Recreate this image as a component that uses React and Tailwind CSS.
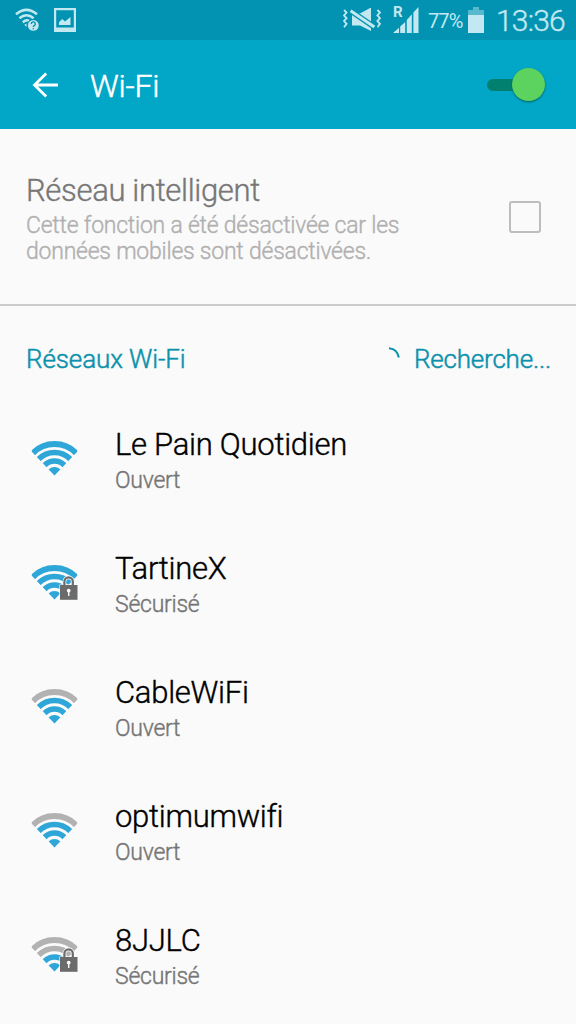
import React from "react";

const networks = [
  { name: "Le Pain Quotidien", status: "Ouvert", level: 4, secured: false },
  { name: "TartineX", status: "Sécurisé", level: 4, secured: true },
  { name: "CableWiFi", status: "Ouvert", level: 3, secured: false },
  { name: "optimumwifi", status: "Ouvert", level: 3, secured: false },
  { name: "8JJLC", status: "Sécurisé", level: 2, secured: true },
];

const bands = [
  { level: 4, radius: 30.6, width: 6 },
  { level: 3, radius: 22.2, width: 5.6 },
  { level: 2, radius: 13.7, width: 5.6 },
];

const WifiIcon = ({ level, secured }) => (
  <svg className="w-[49px] h-[40px] shrink-0" viewBox="0 0 49 40" fill="none">
    <defs>
      <clipPath id="fan">
        <path d="M24.5 34.6 L1.8 10.8 V-1 H47.2 V10.8 Z" />
      </clipPath>
    </defs>
    <g clipPath="url(#fan)">
      {bands.map((band) => (
        <circle
          key={band.level}
          cx="24.5"
          cy="33.7"
          r={band.radius}
          stroke={band.level <= level ? "#2ea7d8" : "#b2b2b2"}
          strokeWidth={band.width}
        />
      ))}
      <circle cx="24.5" cy="34" r="8" fill="#2ea7d8" />
    </g>
    {secured && (
      <g>
        <path d="M34.4 20 V16.6 a4.2 4.2 0 0 1 8.4 0 V20" stroke="#fafafa" strokeWidth="3.6" />
        <path d="M29.4 19.5 H48 V35 H29.4 Z" fill="#fafafa" />
        <path d="M34.4 21 V16.6 a4.2 4.2 0 0 1 8.4 0 V21" stroke="#6b6b6b" strokeWidth="2.2" />
        <path d="M30 20 H47.5 V34.8 H30 Z" fill="#6b6b6b" />
        <circle cx="38.7" cy="25.6" r="1.9" fill="#fafafa" />
        <path d="M38 25.6 H39.4 V31 H38 Z" fill="#fafafa" />
      </g>
    )}
  </svg>
);

const StatusBar = () => (
  <div className="h-10 bg-[#0193b1] flex items-center justify-between pl-[15px] pr-[11px] text-[#c3e8f1]">
    <div className="flex items-center gap-[14px]">
      <svg className="w-[25px] h-[24px]" viewBox="0 0 25 24" fill="none">
        <path d="M1 6.2 Q11.5 -2.6 22 6.2" stroke="currentColor" strokeWidth="2.6" />
        <path d="M4.4 10.3 Q11.5 4.2 18.6 10.3" stroke="currentColor" strokeWidth="2.6" />
        <path d="M7.8 14.2 Q11 11.5 14 12.6" stroke="currentColor" strokeWidth="2.5" />
        <path d="M9.3 16.8 L11.5 15.6 V19 Z" fill="currentColor" />
        <circle cx="18.3" cy="17.4" r="6.3" fill="#0193b1" />
        <circle cx="18.3" cy="17.4" r="5.4" fill="currentColor" />
        <path d="M16.3 16 a2 2 0 1 1 3 1.6 q-1 .5 -1 1.4" stroke="#0193b1" strokeWidth="1.4" />
        <circle cx="18.3" cy="20.7" r=".8" fill="#0193b1" />
      </svg>
      <svg className="w-[22px] h-[24px]" viewBox="0 0 22 24" fill="none">
        <path d="M0 0 H22 V24 H0 Z M2.2 2.2 V19.6 H19.8 V2.2 Z" fill="currentColor" fillRule="evenodd" />
        <path d="M5 17 V14.3 L8.2 11 L11 13.4 L16.5 9 V17 Z" fill="currentColor" />
      </svg>
    </div>

    <div className="flex items-center">
      <svg className="w-[38px] h-[24px] mr-3" viewBox="0 0 38 24" fill="none" stroke="currentColor">
        <path d="M1 2 L3.6 4.6 L1 7.4 L3.6 10.2 L1 13 L3.6 15.8 L1 19.2" strokeWidth="1.8" />
        <path d="M34.4 2 L37 4.6 L34.4 7.4 L37 10.2 L34.4 13 L37 15.8 L34.4 19.2" strokeWidth="1.8" />
        <path d="M9 5.5 H17 L28 -.5 V23 L17 17.4 H9 Z" fill="currentColor" stroke="none" />
        <path d="M6 1.6 L33 20.2" stroke="#0193b1" strokeWidth="5.6" />
        <path d="M7.6 2.7 L31.4 19.1" strokeWidth="3" />
      </svg>
      <div className="relative w-[26px] h-[26px] mr-[9px]">
        <span className="absolute left-0 -top-px font-bold text-[15px] leading-[13px]">R</span>
        <svg className="w-[26px] h-[26px]" viewBox="0 0 26 26" fill="currentColor">
          <path d="M0 26 L6 20.8 V26 Z M7.2 19.6 L12.2 15 V26 H7.2 Z M13.8 13 L18.8 7.2 V26 H13.8 Z M20.4 5.4 L25.5 0 V26 H20.4 Z" />
        </svg>
      </div>
      <span className="w-[35px] mr-[5px] pt-px text-[20px] leading-6 tracking-[-0.9px] whitespace-nowrap">77%</span>
      <svg className="w-4 h-[26px] mr-3" viewBox="0 0 16 26" fill="currentColor">
        <path d="M5 0 H11 V3 H16 V8 H0 V3 H5 Z" opacity=".45" />
        <path d="M0 8 H16 V26 H0 Z" />
      </svg>
      <span className="w-[69px] pt-0.5 font-light text-[30px] leading-8 tracking-[-0.8px] whitespace-nowrap [-webkit-text-stroke:0.4px]">13:36</span>
    </div>
  </div>
);

const Header = () => (
  <header className="h-[89px] bg-[#02a6c6] flex items-center pl-8 pr-[31px] text-white">
    <svg className="w-[26px] h-[26px]" viewBox="0 0 26 26" fill="none" stroke="currentColor" strokeWidth="2.8">
      <path d="M14.2 1.5 L2.5 13 L14.2 24.5 M2.5 13 H26" />
    </svg>
    <h1 className="ml-8 pt-[3px] text-[32px] leading-9 tracking-[-0.2px] font-light [-webkit-text-stroke:0.5px]">Wi-Fi</h1>
    <div className="ml-auto relative w-[58px] h-[34px] flex items-center">
      <div className="w-12 h-3 rounded-full bg-[#02806f]" />
      <div className="absolute right-0 top-0 size-[33px] rounded-full bg-[#5cd35f] shadow-[0_1px_2px_#00605f]" />
    </div>
  </header>
);

const App = () => {
  return (
    <div className="w-[576px] h-[1024px] overflow-hidden bg-[#fafafa] font-['Roboto',sans-serif]">
      <StatusBar />
      <Header />

      {/* Smart network switch */}
      <section className="h-[177px] border-b-2 border-[#cccccc] flex items-center justify-between pl-[26px] pr-[35px]">
        <div className="pt-[5px] font-light [-webkit-text-stroke:0.4px]">
          <h2 className="text-[31px] leading-9 text-[#777777] tracking-[-0.33px]">Réseau intelligent</h2>
          <p className="text-[23px] leading-[26px] pt-1 text-[#b0b0b0] tracking-[-0.23px] whitespace-nowrap">
            Cette fonction a été désactivée car les
            <br />
            données mobiles sont désactivées.
          </p>
        </div>
        <div className="size-8 rounded-[3px] border-[2.5px] border-[#bdbdbd]" />
      </section>

      <div className="h-[106px] flex items-center pl-[26px] pr-[26px] text-[26px] leading-[30px] text-[#0b91ac] font-light [-webkit-text-stroke:0.5px]">
        <span className="tracking-[-0.1px]">Réseaux Wi-Fi</span>
        <svg className="w-[11px] h-[12px] ml-auto mr-[14px] -mt-3" viewBox="0 0 11 12" fill="none" stroke="currentColor">
          <path d="M0 1.2 Q8.5 2 9.8 10.5" strokeWidth="2" />
        </svg>
        <span className="w-[136px] tracking-[-0.2px] whitespace-nowrap">Recherche...</span>
      </div>

      {/* Available networks */}
      <ul>
        {networks.map((network) => (
          <li key={network.name} className="h-[124px] pt-[15px] pl-[30px] flex">
            <div className="pt-[14px]">
              <WifiIcon level={network.level} secured={network.secured} />
            </div>
            <div className="ml-9 font-light [-webkit-text-stroke:0.4px]">
              <p className="text-[31px] leading-9 text-black tracking-[-0.27px]">{network.name}</p>
              <p className="mt-0.5 text-[23px] leading-8 text-[#757575] tracking-[-0.25px]">{network.status}</p>
            </div>
          </li>
        ))}
      </ul>
    </div>
  );
};

export default App;
